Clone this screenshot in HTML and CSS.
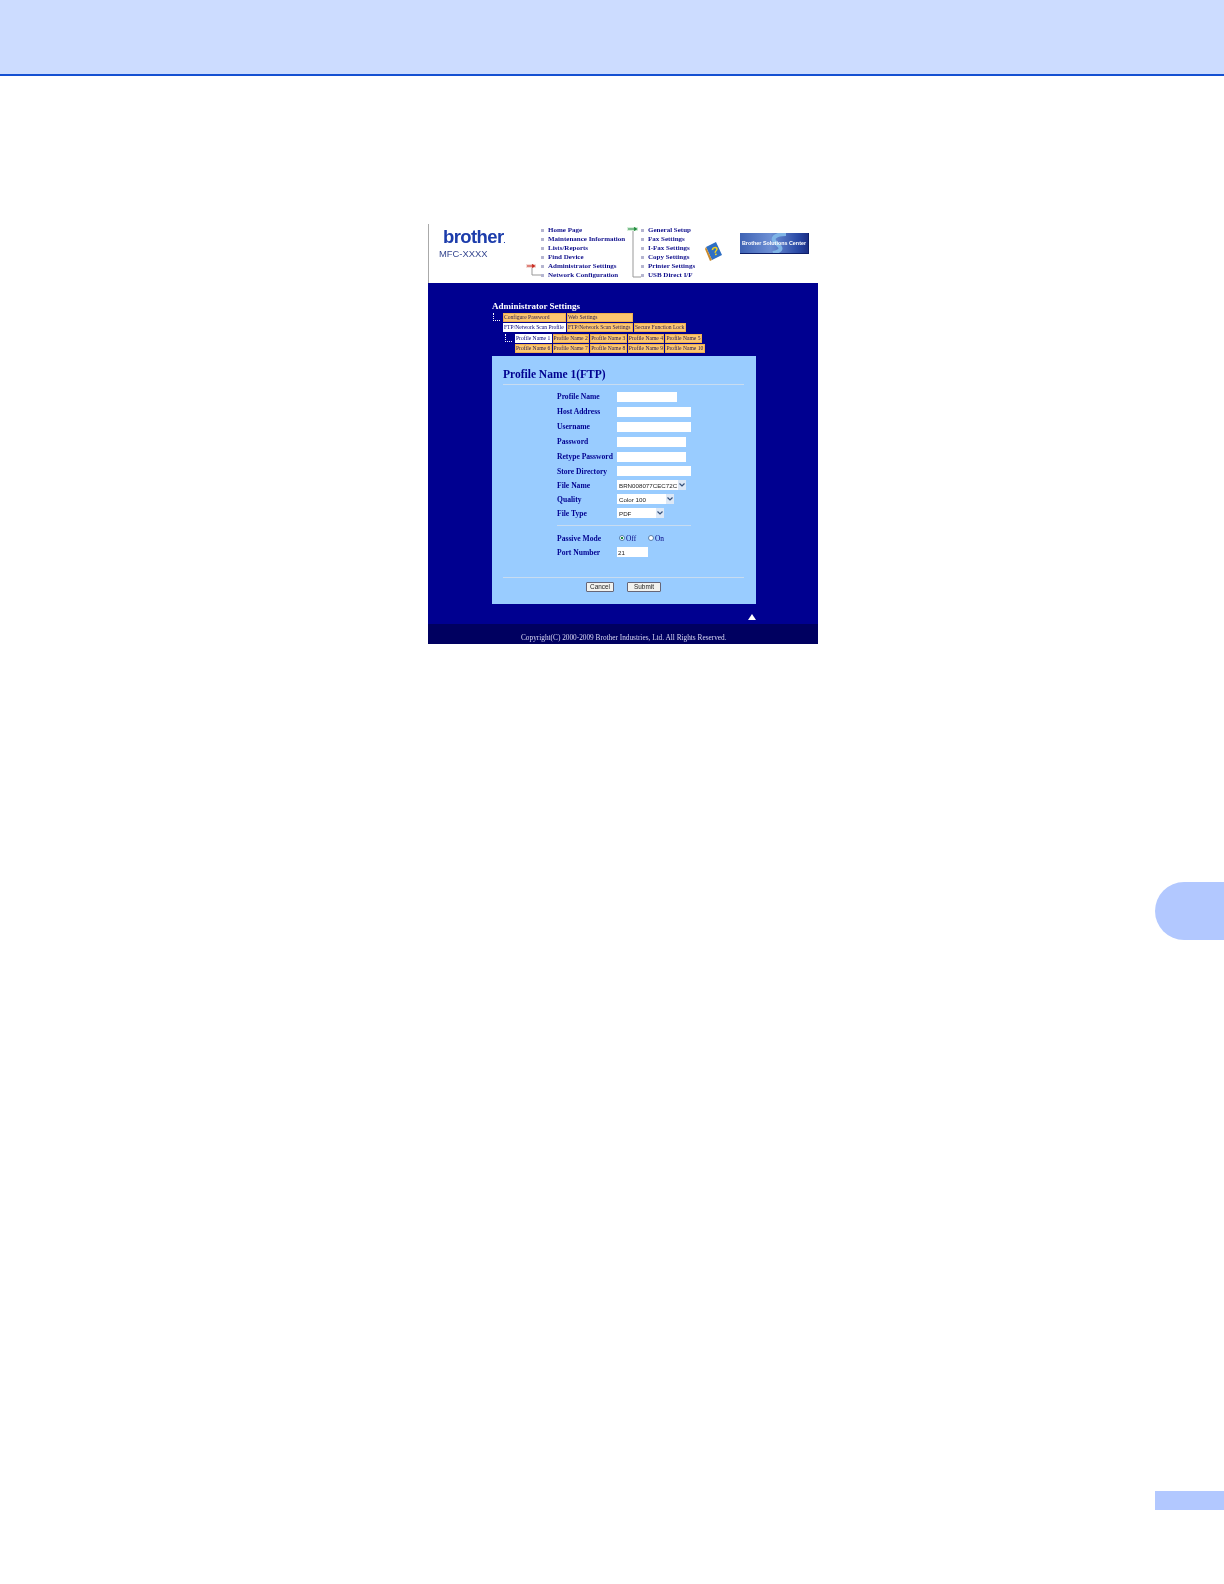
FILE: index.html
```html
<!DOCTYPE html>
<html lang="en">
<head>
<meta charset="utf-8">
<title>Profile Name 1(FTP)</title>
<link rel="stylesheet" href="styles.css">
</head>
<body>
<header class="band"></header>
<main class="shot">
  <nav class="top">
    <div class="brand">
      <div class="logo">brother<span class="dot">.</span></div>
      <div class="model">MFC-XXXX</div>
    </div>
    <div class="col col-a">
      <svg class="link link-a" width="16" height="14" viewBox="0 0 16 14"><path d="M6 4V11H15" fill="none" stroke="#999" stroke-width="1"/><rect x="0" y="0" width="10" height="4" fill="#f4dcd8"/><path d="M1 2H8M6 .5L8.5 2L6 3.5" fill="none" stroke="#c8281e" stroke-width="1.2"/></svg>
      <ul class="menu">
        <li>Home Page</li>
        <li>Maintenance Information</li>
        <li>Lists/Reports</li>
        <li>Find Device</li>
        <li>Administrator Settings</li>
        <li>Network Configuration</li>
      </ul>
    </div>
    <div class="col col-b">
      <svg class="link link-b" width="16" height="52" viewBox="0 0 16 52"><path d="M6 4V50H14" fill="none" stroke="#999" stroke-width="1"/><rect x="0" y="0" width="11" height="4" fill="#d8f0dc"/><path d="M1 2H9M7 .5L9.5 2L7 3.5" fill="none" stroke="#1e8a3c" stroke-width="1.2"/></svg>
      <ul class="menu">
        <li>General Setup</li>
        <li>Fax Settings</li>
        <li>I-Fax Settings</li>
        <li>Copy Settings</li>
        <li>Printer Settings</li>
        <li>USB Direct I/F</li>
      </ul>
    </div>
    <div class="help">
      <svg width="18" height="19" viewBox="0 0 18 19"><path d="M1 5L11 0L17 13L7 18Z" fill="#2f6fc4"/><path d="M1 5L7 18L5 19L0 7Z" fill="#c98a2c"/><text x="6.5" y="13.5" class="q" transform="rotate(-15 9 9)">?</text></svg>
    </div>
    <div class="center">
      <svg class="swoosh" width="69" height="21" viewBox="0 0 69 21"><path d="M46 1C36 1 30 5 36 10C41 14 44 17 33 20" fill="none" stroke="#7fb4e6" stroke-width="4"/></svg>
      <span class="center-text">Brother Solutions Center</span>
    </div>
  </nav>
  <section class="stage">
    <div class="content">
      <h2 class="section">Administrator Settings</h2>
      <div class="tree-group">
        <span class="tree"></span>
        <div class="rows">
          <div class="tabs">
            <span class="tab w63">Configure Password</span>
            <span class="tab w66">Web Settings</span>
          </div>
          <div class="tabs">
            <span class="tab w63 on">FTP/Network Scan Profile</span>
            <span class="tab w66">FTP/Network Scan Settings</span>
            <span class="tab w53">Secure Function Lock</span>
          </div>
        </div>
      </div>
      <div class="tree-group sub">
        <span class="tree"></span>
        <div class="rows">
          <div class="tabs">
            <span class="tab w37 on">Profile Name 1</span>
            <span class="tab w37">Profile Name 2</span>
            <span class="tab w37">Profile Name 3</span>
            <span class="tab w37">Profile Name 4</span>
            <span class="tab w37">Profile Name 5</span>
          </div>
          <div class="tabs">
            <span class="tab w37">Profile Name 6</span>
            <span class="tab w37">Profile Name 7</span>
            <span class="tab w37">Profile Name 8</span>
            <span class="tab w37">Profile Name 9</span>
            <span class="tab w40">Profile Name 10</span>
          </div>
        </div>
      </div>
      <div class="panel">
        <h1 class="title">Profile Name 1(FTP)</h1>
        <hr class="rule">
        <div class="form">
          <div class="row"><label>Profile Name</label><input class="in w60" type="text"></div>
          <div class="row"><label>Host Address</label><input class="in w74" type="text"></div>
          <div class="row"><label>Username</label><input class="in w74" type="text"></div>
          <div class="row"><label>Password</label><input class="in w69" type="password"></div>
          <div class="row"><label>Retype Password</label><input class="in w69" type="password"></div>
          <div class="row tight"><label>Store Directory</label><input class="in w74" type="text"></div>
          <div class="row tight"><label>File Name</label>
            <div class="sel w69"><span>BRN008077CEC72C</span><i class="arrow"><svg width="6" height="4" viewBox="0 0 6 4"><path d="M.5 .5L3 3L5.5 .5" fill="none" stroke="#35507a" stroke-width="1.2"/></svg></i></div></div>
          <div class="row tight"><label>Quality</label>
            <div class="sel w57"><span>Color 100</span><i class="arrow"><svg width="6" height="4" viewBox="0 0 6 4"><path d="M.5 .5L3 3L5.5 .5" fill="none" stroke="#35507a" stroke-width="1.2"/></svg></i></div></div>
          <div class="row tight"><label>File Type</label>
            <div class="sel w47"><span>PDF</span><i class="arrow"><svg width="6" height="4" viewBox="0 0 6 4"><path d="M.5 .5L3 3L5.5 .5" fill="none" stroke="#35507a" stroke-width="1.2"/></svg></i></div></div>
          <hr class="rule short">
          <div class="row tight"><label>Passive Mode</label>
            <div class="radios">
              <span class="radio"><i class="dot-r checked"></i>Off</span>
              <span class="radio"><i class="dot-r"></i>On</span>
            </div></div>
          <div class="row tight"><label>Port Number</label><input class="in w31 port" type="text" value="21"></div>
        </div>
        <hr class="rule bottom">
        <div class="actions">
          <button class="btn cancel" type="button">Cancel</button>
          <button class="btn submit" type="button">Submit</button>
        </div>
      </div>
      <div class="up"><svg width="8" height="6" viewBox="0 0 8 6"><path d="M4 0L8 6H0Z" fill="#fff"/></svg></div>
    </div>
    <footer class="foot">Copyright(C) 2000-2009 Brother Industries, Ltd. All Rights Reserved.</footer>
  </section>
</main>
<div class="thumb"></div>
<div class="pageno"></div>
</body>
</html>
```
FILE: styles.css
```css
* { box-sizing: border-box; }
html, body { margin: 0; padding: 0; }
body { width: 1224px; height: 1584px; background: #fff; position: relative; overflow: hidden; font-family: "Liberation Serif", serif; }

.band { height: 76px; background: #ccdcff; border-bottom: 2px solid #1450d2; }

.shot { width: 390px; height: 420px; margin: 148px 0 0 428px; display: flex; flex-direction: column; filter: blur(0.3px); }

.top { height: 59px; display: flex; border-left: 1px solid #aaa; background: #fff; }
.brand { width: 97px; padding: 5px 0 0 10px; }
.logo { font: 700 18.5px/15px "Liberation Sans", sans-serif; letter-spacing: -.6px; color: #1c3cab; padding-left: 4px; white-space: nowrap; }
.dot { font-size: 7px; }
.model { font: 400 9.4px/11px "Liberation Sans", sans-serif; color: #35468f; white-space: nowrap; }

.col { position: relative; padding-top: 1.5px; }
.col-a { width: 100px; padding-left: 15px; }
.col-b { width: 79px; padding-left: 15px; }
.link { position: absolute; }
.link-a { left: 0; top: 40px; }
.link-b { left: 1px; top: 3px; }
.menu { list-style: none; margin: 0; padding: 0; }
.menu li { font-size: 7px; font-weight: 700; line-height: 9.15px; color: #10108c; white-space: nowrap; display: flex; align-items: center; gap: 4px; }
.menu li::before { content: ""; width: 3px; height: 3px; background: #b4b4d0; flex: none; }

.help { width: 35px; padding-top: 18px; }
.q { font: 700 12px "Liberation Sans", sans-serif; fill: #f2d21c; }
.center { width: 69px; height: 21px; margin-top: 9px; background: linear-gradient(90deg, #3f63b4, #6d8fd4 45%, #2a4aa6 85%, #1c2f86); border-right: 1px solid #0e1f6a; border-bottom: 1px solid #0e1f6a; position: relative; display: flex; align-items: center; justify-content: center; overflow: hidden; }
.swoosh { position: absolute; left: 0; top: 0; }
.center-text { position: relative; font: 700 5.4px "Liberation Sans", sans-serif; color: #fff; white-space: nowrap; }

.stage { flex: 1; background: #000090; display: flex; flex-direction: column; }
.content { height: 341px; padding: 17px 0 0 64px; position: relative; }
.section { margin: 0; font-size: 9px; line-height: 13px; height: 13px; font-weight: 700; color: #fff; white-space: nowrap; }

.tree-group { display: flex; }
.tree-group.sub { margin: 2px 0 0 12px; }
.tree { width: 7px; height: 8px; margin: 0 3px 0 1px; border-left: 1px dotted #fff; border-bottom: 1px dotted #fff; flex: none; }
.rows { display: flex; flex-direction: column; gap: 1px; }
.tabs { display: flex; gap: 1px; height: 9px; }
.tab { height: 9px; background: #fcc670; border: 1px solid #f0b050; color: #2a1a50; font-size: 5.6px; line-height: 7px; white-space: nowrap; overflow: hidden; }
.tab.on { background: #fff; border-color: #fff; color: #000080; }
.w63 { width: 63px; } .w66 { width: 66px; } .w53 { width: 52px; } .w37 { width: 36.6px; } .w40 { width: 39.5px; }

.panel { width: 264px; height: 248px; margin-top: 3px; background: #99ccff; padding: 11px 12px 0 11px; display: flex; flex-direction: column; }
.title { margin: 0; font-size: 11.5px; line-height: 14px; font-weight: 700; color: #000090; white-space: nowrap; }
.rule { height: 1px; margin: 3px 0 0; border: 0; background: #c8dcf0; }
.form { margin: 4px 0 0 54px; display: flex; flex-direction: column; }
.row { display: flex; align-items: center; height: 15px; }
.row.tight { height: 14px; }
.row label { width: 60px; flex: none; font-size: 7.6px; font-weight: 700; color: #000090; white-space: nowrap; }
.in { height: 10px; padding: 0 1px; border: 0; background: #fff; outline: 0; margin: 0; font: 400 6.2px "Liberation Sans", sans-serif; color: #222; display: block; }
.w60 { width: 60px; } .w74 { width: 74px; } .w69 { width: 69px; } .w57 { width: 57px; } .w47 { width: 47px; } .w31 { width: 31px; }
.sel { height: 10px; background: #fff; display: flex; justify-content: space-between; align-items: center; font: 400 6.2px "Liberation Sans", sans-serif; color: #222; padding-left: 2px; white-space: nowrap; overflow: hidden; }
.arrow { width: 8px; height: 10px; background: #dde8f6; display: flex; align-items: center; justify-content: center; flex: none; }
.rule.short { width: 134px; margin: 5px 0 5px; }
.radios { display: flex; gap: 8px; margin-left: 2px; }
.radio { display: flex; align-items: center; gap: 1px; font-size: 7.4px; color: #000080; width: 21px; }
.dot-r { width: 6px; height: 6px; border-radius: 50%; background: #fff; border: 1px solid #5a7fa8; display: block; flex: none; }
.dot-r.checked { background: radial-gradient(circle, #1e8a3c 0 1.2px, #fff 1.5px); }
.rule.bottom { margin: 18px 0 0; }
.actions { display: flex; margin: 4px 0 0 83px; gap: 13px; }
.btn { height: 10px; padding: 0; margin: 0; border: 1px solid #667; border-radius: 1px; background: #f2f2ee; font: 400 6.4px/8px "Liberation Sans", sans-serif; color: #222; display: block; }
.cancel { width: 28px; } .submit { width: 34px; }

.up { position: absolute; left: 320px; top: 331px; line-height: 0; }
.foot { flex: 1; background: #000060; color: #d8d8f4; font-size: 7.3px; line-height: 13px; padding: 7px 0 0 93px; white-space: nowrap; }

.thumb { position: absolute; left: 1155px; top: 882px; width: 69px; height: 58px; background: #b2c8ff; border-radius: 29px 0 0 29px; }
.pageno { position: absolute; left: 1155px; top: 1491px; width: 69px; height: 19px; background: #b2c8ff; }
```
